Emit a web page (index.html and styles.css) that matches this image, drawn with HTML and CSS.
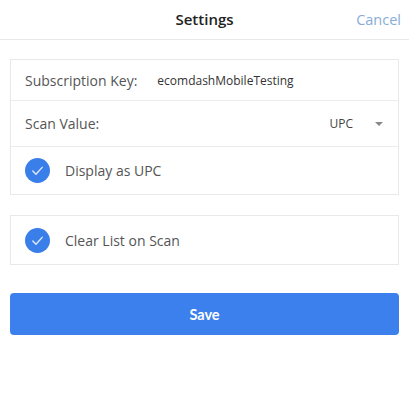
FILE: index.html
```html
<!DOCTYPE html>
<html>
<head>
<meta charset="utf-8">
<link rel="stylesheet" href="styles.css">
</head>
<body>
<header class="topbar">
  <span></span>
  <h1 class="title">Settings</h1>
  <a class="cancel">Cancel</a>
</header>
<main class="content">
  <section class="card">
    <div class="row row-key">
      <span class="label">Subscription Key:</span>
      <span class="value">ecomdashMobileTesting</span>
    </div>
    <div class="row row-scan">
      <span class="label">Scan Value:</span>
      <span class="select">UPC <span class="caret"></span></span>
    </div>
    <div class="row row-check">
      <span class="check"><svg viewBox="0 0 24 24" width="25" height="25"><path d="M7.5 12.5l3 3 6-6.5" fill="none" stroke="#dbe8ff" stroke-width="1.4" stroke-linecap="round" stroke-linejoin="round"/></svg></span>
      <span class="check-label">Display as UPC</span>
    </div>
  </section>
  <section class="card card-single">
    <div class="row row-check">
      <span class="check"><svg viewBox="0 0 24 24" width="25" height="25"><path d="M7.5 12.5l3 3 6-6.5" fill="none" stroke="#dbe8ff" stroke-width="1.4" stroke-linecap="round" stroke-linejoin="round"/></svg></span>
      <span class="check-label">Clear List on Scan</span>
    </div>
  </section>
  <button class="save">Save</button>
</main>
</body>
</html>
```
FILE: styles.css
```css
* { box-sizing: border-box; }
body {
  margin: 0;
  background: #fff;
  font-family: "Open Sans", "Liberation Sans", sans-serif;
  color: #555;
}
.topbar {
  height: 40px;
  border-bottom: 1px solid #e8e8e8;
  display: grid;
  grid-template-columns: 1fr auto 1fr;
  align-items: center;
}
.title {
  margin: 0;
  font-size: 15px;
  font-weight: 600;
  color: #222;
  padding-bottom: 1px;
}
.cancel {
  justify-self: end;
  padding-right: 8px;
  font-size: 14.5px;
  color: #89acd6;
  padding-bottom: 1px;
}
.content {
  padding: 19px 10px 0;
}
.card {
  border: 1px solid #e9e9e9;
  box-shadow: 0 0 1px rgba(0,0,0,0.04);
}
.card-single {
  margin-top: 20px;
}
.row {
  display: flex;
  align-items: center;
  padding: 0 14px;
}
.row-key {
  height: 41px;
  border-bottom: 1px solid #ececec;
}
.row-scan {
  height: 46px;
  border-bottom: 1px solid #ececec;
}
.row-check {
  height: 47px;
}
.card-single .row-check {
  height: 48px;
}
.label {
  font-size: 14px;
  color: #555;
}
.value {
  margin-left: 20px;
  font-size: 12px;
  color: #333;
}
.select {
  margin-left: auto;
  display: flex;
  align-items: center;
  font-size: 12px;
  color: #444;
  padding-right: 1px;
}
.caret {
  margin-left: 22px;
  width: 0;
  height: 0;
  border-left: 4px solid transparent;
  border-right: 4px solid transparent;
  border-top: 4px solid #888;
}
.check {
  width: 25px;
  height: 25px;
  border-radius: 50%;
  background: #3a7ee9;
  display: flex;
  flex: none;
}
.check-label {
  margin-left: 15px;
  font-size: 14px;
  color: #555;
}
.save {
  display: block;
  width: 100%;
  height: 42px;
  margin-top: 28px;
  border: none;
  border-radius: 4px;
  background: #3b80ec;
  color: #fff;
  font-family: "Lato", "Open Sans", sans-serif;
  font-weight: 700;
  font-size: 14.5px;
}
```
